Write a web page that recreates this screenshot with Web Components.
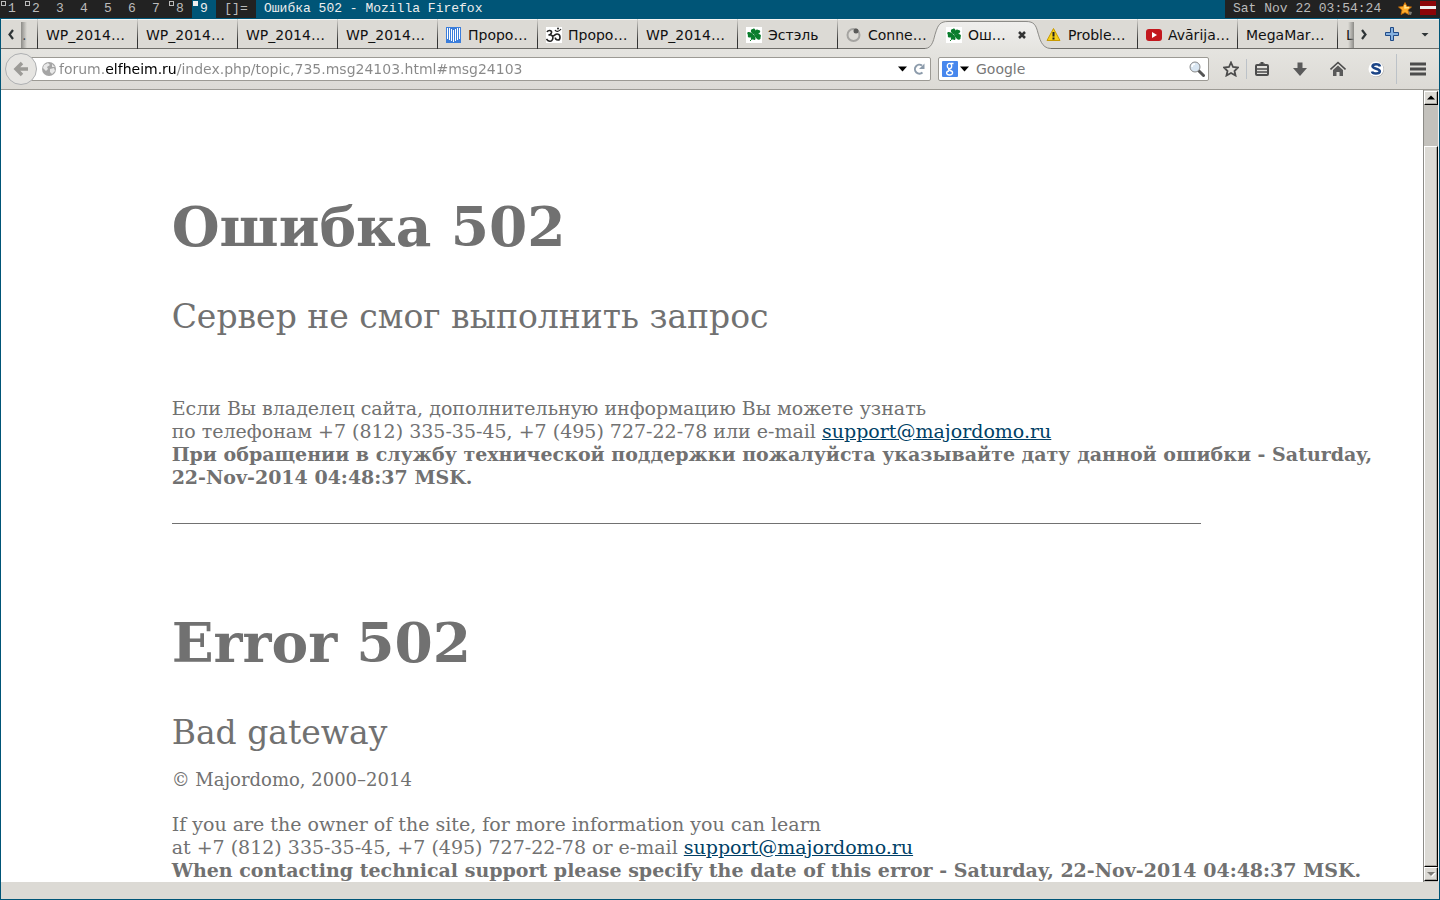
<!DOCTYPE html>
<html lang="ru">
<head>
<meta charset="utf-8">
<title>Ошибка 502</title>
<style>
  html, body { height: 100%; margin: 0; }
  body {
    --chrome: #dcdad5;
    --accent: #005577;
    --line: #9c9a94;
    background: var(--accent);
    color: #111;
    font: 14px/18px "DejaVu Sans", sans-serif;
    overflow: hidden;
  }
</style>
</head>
<body>
<desktop-screen></desktop-screen>

<script>
const define = (name, html, setup) => {
  customElements.define(name, class extends HTMLElement {
    constructor() {
      super();
      this.attachShadow({ mode: 'open' });
      this.shadowRoot.innerHTML = html;
    }
    connectedCallback() {
      if (setup) setup(this, this.shadowRoot);
    }
  });
};

const icons = {
  book: `<rect width="15" height="16" fill="#3a7ddb"/><path d="M1.5 1v11M3.5 1v12M5.5 2v12M7.5 3v12M9.5 2v12M11.5 1v12M13.5 1v11" stroke="#fff"/>`,
  om: `<rect width="16" height="16" fill="#fff"/><g fill="none" stroke="#222" stroke-width="1.600"><path d="M1 5c1-2 5-2 4.500.5C5 7.500 4 8 2.500 8c4-1 5 2 4 4.500-1 2.500-4 2.500-6-.5"/><path d="M6 9c3 .5 3-2.500 5.500-2 3.500.5 3 6 .5 6-2 0-3-1.500-2.500-2.500"/><path d="M9 3c1 2 4 2 6-1" stroke-width="1.200"/></g><circle cx="12" cy="1.500" r="1" fill="#222"/>`,
  clover: `<rect width="16" height="16" fill="#fff"/><g fill="#0a7d2c"><path d="M8 7.500C4 6 4 1.500 7 2c1-1.500 4.500 1 1 5.500z"/><path d="M8 8c0-5 3-6.500 4.500-5C15.500 3 15 7.500 8 8z"/><path d="M8 8.500c-4 3.500-7 2-6-.5C-.5 5 4 3 8 8.500z"/><path d="M8 7.500c6-1.500 8 .5 6.500 2.500 1 3-3.500 5-6.500-2.500z"/><path d="M8 8c3 4 1 6-1 4.500-3 .5-3-3 1-4.500z"/></g><path d="M8 8c-1 3-2 4-4 6" stroke="#0a7d2c" fill="none"/>`,
  wait: `<circle cx="7.500" cy="8" r="6" fill="none" stroke="#a5a4a1" stroke-width="2"/><circle cx="10" cy="4" r="2.500" fill="#5a5a58"/>`,
  warn: `<path d="M7.500 1.500 14 13.500H1z" fill="#f6d017" stroke="#c89a00" stroke-linejoin="round"/><path d="M7.500 5v4.500M7.500 10.500v2" stroke="#222" stroke-width="2"/>`,
  video: `<rect y="2" width="16" height="12" rx="3" fill="#c3181e"/><path d="M6 5l5 3-5 3z" fill="#fff"/>`
};
const svg = (body, w = 16, h = 16) =>
  `<svg width="${w}" height="${h}" viewBox="0 0 ${w} ${h}" aria-hidden="true">${body}</svg>`;

/* window manager bar */
define('wm-bar', `
  <style>
    :host { display: flex; height: 18px; background: var(--accent); color: #bbb; font: 13px/17px "Liberation Mono", monospace; white-space: pre; }
    .tags, .tray { display: flex; align-items: flex-start; background: #222; }
    button { all: unset; position: relative; width: 24px; text-align: center; padding-bottom: 1px; }
    .used::before { content: ""; position: absolute; left: 1px; top: 1px; width: 3px; height: 3px; border: 1px solid #bbb; }
    .sel { background: var(--accent); color: #eee; }
    .sel::before { background: #eee; border-color: #eee; }
    .layout { width: 40px; background: #222; text-align: center; }
    .title { flex: 1; padding: 0 8px; color: #eee; }
    .tray { gap: 6px; padding: 0 4px 0 8px; }
    .clock { min-width: 159px; }
    svg { display: block; }
  </style>
  <div class="tags"></div>
  <div class="layout">[]=</div>
  <div class="title">Ошибка 502 - Mozilla Firefox</div>
  <div class="tray">
    <span class="clock">Sat Nov 22 03:54:24</span>
    ${svg('<path d="M9 11l5 1-1 3-4-1z" fill="#7c7c78"/><path d="M7 2.500l2 4 4.500.5L10 10l1 4.500-4-2-4 2L4 10 .5 7 5 6.500z" fill="#ffab28" stroke="#c96c08" stroke-width=".8"/><path d="M7 5v3l4-.5" stroke="#ffe28a" fill="none" stroke-width="1.500"/>')}
    ${svg('<rect y="1" width="16" height="14" fill="#8b0508"/><rect y="6" width="16" height="3" fill="#eee"/>')}
  </div>`,
  (el, root) => {
    root.querySelector('.tags').innerHTML = [1, 2, 3, 4, 5, 6, 7, 8, 9].map(n =>
      `<button class="${[1, 2, 8, 9].includes(n) ? 'used' : ''} ${n === 9 ? 'sel' : ''}">${n}</button>`).join('');
  });

/* one tab: icon="..." plus flags active, after (follows the active one), partial (at the scroll edge) */
define('browser-tab', `
  <style>
    :host { display: flex; flex: 0 0 100px; box-sizing: border-box; height: 30px; padding: 2px 0 0 8px; align-items: center; gap: 6px;
      border-left: 1px solid; border-image: linear-gradient(#dcdad5, #333 70%) 1; position: relative; white-space: nowrap; }
    :host([active]), :host([after]), :host([partial]) { border-image: none; border-color: transparent; }
    :host([partial]) { flex-basis: 16px; padding-left: 0; }
    :host([active]) { z-index: 1; }
    .shape { display: none; position: absolute; left: -18px; top: 0; z-index: -1; }
    :host([active]) .shape { display: block; }
    .icon { display: none; flex: none; }
    :host([icon]) .icon { display: block; }
    .icon svg { display: block; }
    .label { flex: 1; overflow: hidden; }
    button { all: unset; display: none; flex: none; width: 16px; height: 16px; margin-right: 7px; }
    button svg { display: block; }
    :host([active]) button { display: block; }
  </style>
  <svg class="shape" width="140" height="31" viewBox="0 0 140 31" aria-hidden="true">
    <defs><linearGradient id="g" x2="0" y2="1"><stop offset="0" stop-color="#f0efed"/><stop offset="1" stop-color="#e5e4e0"/></linearGradient></defs>
    <path d="M5 31V29.500C13 29.500 14 18 15.500 14C18 6 20 2.500 28 2.500H106C114 2.500 116 6 118 14C119.500 18 121 29.500 131 29.500V31z" fill="url(#g)"/>
    <path d="M5 29.500C13 29.500 14 18 15.500 14C18 6 20 2.500 28 2.500H106C114 2.500 116 6 118 14C119.500 18 121 29.500 131 29.500" fill="none" stroke="#8c8b87"/>
  </svg>
  <span class="icon"></span>
  <span class="label"><slot></slot></span>
  <button aria-label="Close tab">${svg('<path d="M5 5l6 6M11 5l-6 6" stroke="#333" stroke-width="2.500"/>')}</button>`,
  (el, root) => {
    root.querySelector('.icon').innerHTML = svg(icons[el.getAttribute('icon')] || '');
  });

define('tab-strip', `
  <style>
    :host { display: flex; height: 30px; background: var(--chrome); box-shadow: inset 0 1px #f6f5f3, inset 0 -1px #6f6e6a; }
    button { all: unset; display: grid; place-items: center; flex: none; }
    .prev, .next { width: 20px; }
    .new { width: 36px; }
    .all { width: 29px; }
    .view { flex: 1; min-width: 0; overflow: hidden; position: relative; }
    .view::before, .view::after { content: ""; position: absolute; z-index: 2; top: 3px; bottom: 1px; left: 0; width: 6px; background: linear-gradient(90deg, #8c8b87, #dcdad500); }
    .view::after { left: auto; right: 0; background: linear-gradient(270deg, #8c8b87, #dcdad500); }
    .tabs { display: flex; }
    svg { display: block; }
  </style>
  <button class="prev" aria-label="Scroll left">${svg('<path d="M10 4L6.500 8.500 10 13" fill="none" stroke="#2e3436" stroke-width="2.200"/>')}</button>
  <div class="view"><div class="tabs"><slot></slot></div></div>
  <button class="next" aria-label="Scroll right">${svg('<path d="M6 4l3.500 4.500L6 13" fill="none" stroke="#2e3436" stroke-width="2.200"/>')}</button>
  <button class="new" aria-label="New tab">${svg('<path d="M6.500 1.500h3v5h5v3h-5v5h-3v-5h-5v-3h5z" fill="#86b1df" stroke="#204a87"/>')}</button>
  <button class="all" aria-label="All tabs">${svg('<path d="M4.500 7h7L8 10.500z" fill="#2e3436"/>')}</button>`);

define('nav-bar', `
  <style>
    :host { display: flex; align-items: center; height: 40px; padding: 0 13px 0 4px; border-bottom: 1px solid var(--line); background: linear-gradient(#e5e4e0, var(--chrome)); }
    button { all: unset; display: grid; place-items: center; flex: none; width: 16px; height: 24px; }
    svg { display: block; flex: none; }
    .back { box-sizing: border-box; width: 32px; height: 32px; border: 1px solid #aeb0b2; border-radius: 50%; background: #e6e5e2; position: relative; }
    .field { box-sizing: border-box; display: flex; align-items: center; height: 24px; border: 1px solid var(--line); border-radius: 2px; background: #fff; }
    .url { flex: 1; min-width: 0; margin-left: -7px; padding: 0 3px 0 10px; }
    .search { width: 271px; margin-left: 7px; padding: 0 3px; }
    input { flex: 1; min-width: 0; border: 0; padding: 0; margin-left: 6px; font: inherit; background: none; outline: 0; }
    input::placeholder { color: #777; opacity: 1; }
    /* greyed address with the domain in black */
    .address { margin-left: 2px; color: #888; -webkit-text-fill-color: transparent; -webkit-background-clip: text; background-clip: text;
      background-image: linear-gradient(90deg, #888 46px, #000 46px, #000 118px, #888 118px); }
    .tools { display: flex; align-items: center; margin-left: 14px; gap: 22px; }
    .pair { display: flex; align-items: center; gap: 7px; }
    i { width: 1px; height: 20px; background: #bcc2c8; }
    .end { display: flex; align-items: center; gap: 13px; margin-left: -10px; }
    .end i { height: 30px; }
    .engine { width: 12px; }
  </style>
  <button class="back" aria-label="Back">${svg('<path d="M15 8H4M9 2L3 8l6 6" fill="none" stroke="#9c9b97" stroke-width="3.500"/>')}</button>
  <div class="field url">
    ${svg('<circle cx="8" cy="8" r="7" fill="#a5a5a5"/><path d="M3 4l4-2 2 2-3 2 1 2-2 2-3-3zM9 8l4-1 1 3-3 3-2-2zM11 3l3 3-3 0z" fill="#e8e8e8"/>')}
    <input class="address" type="text" aria-label="Address" value="forum.elfheim.ru/index.php/topic,735.msg24103.html#msg24103">
    <button aria-label="History">${svg('<path d="M3 5.500h9L7.500 10.500z" fill="#000"/>')}</button>
    <button aria-label="Reload">${svg('<path d="M11.500 11.500A4.500 4.500 0 1 1 11 4.500" fill="none" stroke="#8c9bab" stroke-width="2"/><path d="M13.500 2.500v5.500h-5.500z" fill="#8c9bab"/>')}</button>
  </div>
  <div class="field search">
    ${svg('<rect width="16" height="16" rx="1" fill="#4787ed"/><g fill="none" stroke="#fff" stroke-width="1.300"><ellipse cx="7.500" cy="5" rx="2.200" ry="2.600"/><path d="M8.500 2.500h3M9 7.300c-3 .7-3 1.700-1 2.200 4 1 3 4.500-.5 4.500s-4-3.500-.5-4"/></g>')}
    <button class="engine" aria-label="Engine">${svg('<path d="M2 3.500h9L6.500 8.500z" fill="#000"/>', 12, 12)}</button>
    <input type="text" placeholder="Google" aria-label="Search">
    <button aria-label="Go">${svg('<path d="M9.500 9.500l5 5" stroke="#555" stroke-width="3" stroke-linecap="round"/><circle cx="6" cy="6" r="5" fill="#d9e6f2" stroke="#888"/><path d="M3 6a3 3 0 0 1 3-3" fill="none" stroke="#fff" stroke-width="1.500"/>')}</button>
  </div>
  <div class="tools">
    <div class="pair">
      <button aria-label="Bookmark">${svg('<path d="M8 1.500l2 4.500 5 .5-3.500 3.500 1 4.500L8 12l-4.500 2.500 1-4.500L1 6.500 6 6z" fill="none" stroke="#4c4c4c" stroke-width="1.800"/>')}</button>
      <i></i>
      <button aria-label="Bookmarks">${svg('<rect x="2" y="4" width="12" height="10" rx="1" fill="none" stroke="#4c4c4c" stroke-width="2"/><path d="M5 4V2.500h1.500V1h3v1.500H11V4z" fill="#4c4c4c"/><path d="M3 6.500h2M6 6.500h7M3 9.500h2M6 9.500h7M3 12.500h2M6 12.500h7" stroke="#e0dfdb"/><path d="M3 8h10M3 11h10" stroke="#4c4c4c" stroke-width="1.500"/>')}</button>
    </div>
    <button aria-label="Downloads">${svg('<path d="M5.500 1.500h5V7H15l-7 8-7-8h4.500z" fill="#5a5a5a"/>')}</button>
    <button aria-label="Home">${svg('<path d="M.5 8.500L8 1.500l7.500 7" fill="none" stroke="#4c4c4c" stroke-width="1.600"/><path d="M3 9L8 4.500 13 9v6H9.500v-4h-3v4H3z" fill="#5a5a5a"/>')}</button>
    <button aria-label="Stylish">${svg('<circle cx="8.500" cy="8.500" r="7.500" fill="#aaa"/><circle cx="8" cy="8" r="7.500" fill="#fff"/><path d="M12 5.500C11.500 2.500 4.500 2.500 4.500 5.300S12 7.500 11.800 10.300 4.500 13.200 4 10.500" fill="none" stroke="#1c4587" stroke-width="2.600"/>')}</button>
    <div class="end">
      <i></i>
      <button aria-label="Menu">${svg('<path d="M0 3h16M0 8h16M0 13h16" stroke="#4c4c4c" stroke-width="3"/>')}</button>
    </div>
  </div>`);

define('scroll-bar', `
  <style>
    :host { display: flex; flex-direction: column; flex: none; width: 16px; box-sizing: border-box; padding: 1px 0; border-left: 1px solid #8c8b87; border-right: 1px solid #eee; background: #c3c1bc; }
    button, .thumb { all: unset; box-sizing: border-box; display: grid; place-items: center; background: var(--chrome); border: 1px solid; border-color: #fff #000 #000 #fff; box-shadow: inset -1px -1px #aaa8a2; }
    button { height: 14px; flex: none; }
    .track { flex: 1; display: flex; flex-direction: column; padding-top: 41px; }
    .thumb { flex: 1; }
  </style>
  <button aria-label="Up">${svg('<path d="M0 4.500h8L4 .5z" fill="#000"/>', 8, 6)}</button>
  <div class="track"><div class="thumb"></div></div>
  <button aria-label="Down">${svg('<path d="M1 2h8L5 6z" fill="#fff"/><path d="M0 1h8L4 5z" fill="#7d7b76"/>', 9, 6)}</button>`);

define('error-notice', `
  <style>
    :host { display: block; }
    ::slotted(h1) { margin: 0; font-size: 55px; line-height: 66px; }
    ::slotted(h2) { margin: 37px 0 0; font-size: 33px; line-height: 40px; font-weight: normal; }
  </style>
  <slot></slot>`);

define('error-page', `
  <style>
    :host { display: block; flex: 1; min-width: 0; overflow: hidden; background: #fff; color: #717171; font: 19px/23px "DejaVu Serif", serif; }
    main { padding: 104px 0 0 12%; }
    a { color: #003f66; }
    .info { margin-top: 60px; }
    .copy { margin: 15px 0 22px; font-size: 18px; }
    .date { white-space: nowrap; }
    hr { width: 1029px; max-width: 100%; margin: 34px 0 86px; border: 0; border-top: 1px solid #717171; }
  </style>
  <main>
    <error-notice>
      <h1>Ошибка 502</h1>
      <h2>Сервер не смог выполнить запрос</h2>
    </error-notice>
    <div class="info">Если Вы владелец сайта, дополнительную информацию Вы можете узнать<br>
      по телефонам +7 (812) 335-35-45, +7 (495) 727-22-78 или e-mail <a href="mailto:support@majordomo.ru">support@majordomo.ru</a><br>
      <b>При обращении в службу технической поддержки пожалуйста указывайте дату данной ошибки - Saturday, <span class="date">22-Nov-2014</span> 04:48:37 MSK.</b></div>
    <hr>
    <error-notice>
      <h1>Error 502</h1>
      <h2>Bad gateway</h2>
    </error-notice>
    <div class="copy">© Majordomo, 2000–2014</div>
    <div>If you are the owner of the site, for more information you can learn<br>
      at +7 (812) 335-35-45, +7 (495) 727-22-78 or e-mail <a href="mailto:support@majordomo.ru">support@majordomo.ru</a><br>
      <b>When contacting technical support please specify the date of this error - Saturday, <span class="date">22-Nov-2014</span> 04:48:37 MSK.</b></div>
  </main>`);

define('desktop-screen', `
  <style>
    :host { display: flex; flex-direction: column; height: 100vh; }
    .window { flex: 1; min-height: 0; display: flex; flex-direction: column; margin: 1px; background: var(--chrome); }
    .content { flex: 1; min-height: 0; display: flex; }
    footer { height: 17px; }
  </style>
  <wm-bar></wm-bar>
  <div class="window">
    <tab-strip>
      <browser-tab partial>.</browser-tab>
      <browser-tab>WP_2014…</browser-tab>
      <browser-tab>WP_2014…</browser-tab>
      <browser-tab>WP_2014…</browser-tab>
      <browser-tab>WP_2014…</browser-tab>
      <browser-tab icon="book">Проро…</browser-tab>
      <browser-tab icon="om">Проро…</browser-tab>
      <browser-tab>WP_2014…</browser-tab>
      <browser-tab icon="clover">Эстэль</browser-tab>
      <browser-tab icon="wait">Conne…</browser-tab>
      <browser-tab icon="clover" active>Ош…</browser-tab>
      <browser-tab icon="warn" after>Proble…</browser-tab>
      <browser-tab icon="video">Avārija…</browser-tab>
      <browser-tab>MegaMar…</browser-tab>
      <browser-tab>L</browser-tab>
    </tab-strip>
    <nav-bar></nav-bar>
    <div class="content"><error-page></error-page><scroll-bar></scroll-bar></div>
    <footer></footer>
  </div>`);
</script>
</body>
</html>
